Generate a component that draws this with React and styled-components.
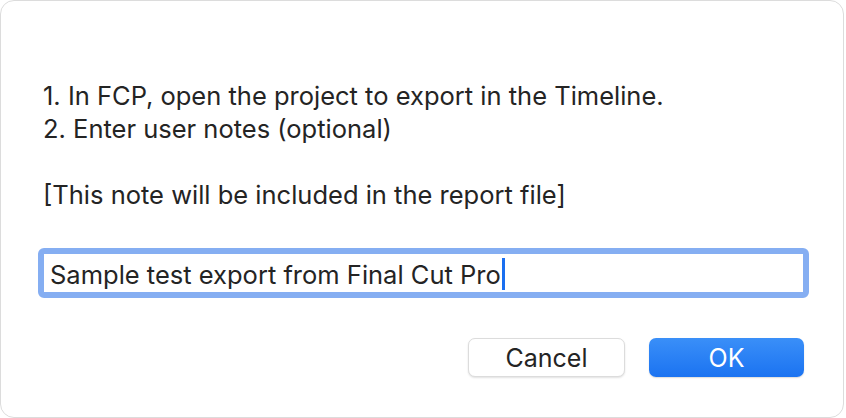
import React, { useState } from 'react';
import styled, { createGlobalStyle } from 'styled-components';

const GlobalStyle = createGlobalStyle`
  html, body {
    margin: 0;
    padding: 0;
    background: #ffffff;
  }
  body {
    font-family: Inter, "Noto Sans", "Liberation Sans", sans-serif;
    -webkit-font-smoothing: antialiased;
  }
`;

const Window = styled.div`
  box-sizing: border-box;
  width: 844px;
  height: 418px;
  border: 1px solid #dcdcdc;
  border-radius: 14px;
  background: #ffffff;
  padding: 78px 37px 0 37px;
  display: flex;
  flex-direction: column;
`;

const Message = styled.div`
  padding-left: 5px;
  font-size: 25.5px;
  line-height: 33px;
  color: #242424;
`;

const Line = styled.div`
  min-height: 33px;
`;

const Field = styled.div`
  margin-top: 37px;
  width: 771px;
  height: 50px;
  box-sizing: border-box;
  border: 6px solid #85aef2;
  border-radius: 6px;
  background: #ffffff;
  display: flex;
  align-items: center;
  padding-left: 6px;
`;

const TextWrap = styled.div`
  display: flex;
  align-items: center;
  font-size: 25.5px;
  color: #242424;
  padding-top: 2px;
`;

const Caret = styled.span`
  display: inline-block;
  width: 3px;
  height: 32px;
  background: #1a6ff0;
  margin-left: 1px;
`;

const Buttons = styled.div`
  margin-top: 40px;
  display: flex;
  justify-content: flex-end;
  gap: 24px;
  padding-right: 2px;
`;

const Button = styled.button`
  width: ${(p) => p.$w || 157}px;
  height: 39px;
  border-radius: 7px;
  font-family: inherit;
  font-size: 25px;
  padding: 0;
  cursor: pointer;
  ${(p) =>
    p.$primary
      ? `
    background: linear-gradient(#3a8ff8, #1b73f1);
    color: #ffffff;
    border: none;
    box-shadow: 0 1px 1.5px rgba(0,0,0,0.15);
  `
      : `
    background: #ffffff;
    color: #242424;
    border: 1px solid #dcdcdc;
    box-shadow: 0 1px 2px rgba(0,0,0,0.12);
  `}
`;

export default function App() {
  const [note] = useState('Sample test export from Final Cut Pro');
  return (
    <>
      <GlobalStyle />
      <Window>
        <Message>
          <Line>1. In FCP, open the project to export in the Timeline.</Line>
          <Line>2. Enter user notes (optional)</Line>
          <Line />
          <Line>[This note will be included in the report file]</Line>
        </Message>
        <Field>
          <TextWrap>
            {note}
            <Caret />
          </TextWrap>
        </Field>
        <Buttons>
          <Button $w={157}>Cancel</Button>
          <Button $primary $w={155}>OK</Button>
        </Buttons>
      </Window>
    </>
  );
}
